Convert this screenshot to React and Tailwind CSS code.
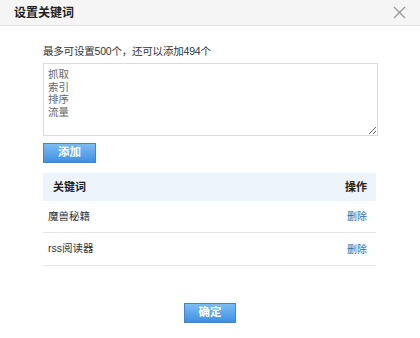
export default function App() {
  const font = { fontFamily: '"Liberation Sans", "Noto Sans CJK SC", sans-serif' };
  return (
    <div className="w-[420px] h-[338px] bg-white text-[#333] overflow-hidden" style={font}>
      <div className="h-[26px] bg-[#f5f5f5] border-b border-[#e3e3e3] flex items-center justify-between pl-[14px] pr-[14px]">
        <span className="text-[12px] font-bold text-[#222] leading-none">设置关键词</span>
        <svg width="13" height="13" viewBox="0 0 13 13" className="text-[#9a9a9a]">
          <path d="M1 1 L12 12 M12 1 L1 12" stroke="currentColor" strokeWidth="1.3" />
        </svg>
      </div>
      <div className="pl-[43px] pr-[42px]">
        <div className="mt-[18px] text-[10.5px] tracking-[-0.2px] leading-[14px] text-[#333]">最多可设置500个，还可以添加494个</div>
        <textarea
          className="block mt-[5px] w-full h-[73px] border border-[#dcdcdc] pl-[4px] pt-[4px] text-[10.5px] leading-[12.7px] text-[#666] outline-none resize"
          defaultValue={"抓取\n索引\n排序\n流量"}
          style={font}
        />
        <button className="mt-[7px] w-[53px] h-[20px] border border-[#3f84cc] bg-gradient-to-b from-[#7cbcf3] to-[#3f90e2] text-white text-[11.5px] font-bold leading-none flex items-center justify-center">
          添加
        </button>
        <div className="mt-[10px] w-[333px]">
          <div className="h-[28px] bg-[#edf4fc] flex items-center justify-between pl-[10px] pr-[9px] text-[11px] font-bold text-[#222]">
            <span>关键词</span>
            <span>操作</span>
          </div>
          <div className="h-[32px] border-b border-[#e6e6e6] flex items-center justify-between pl-[5px] pr-[9px] text-[10.5px]">
            <span>魔兽秘籍</span>
            <span className="text-[10px] text-[#2f6aa8]">删除</span>
          </div>
          <div className="h-[33px] border-b border-[#e6e6e6] flex items-center justify-between pl-[5px] pr-[9px] text-[10.5px]">
            <span>rss阅读器</span>
            <span className="text-[10px] text-[#2f6aa8]">删除</span>
          </div>
        </div>
      </div>
      <div className="flex justify-center mt-[37px]">
        <button className="w-[52px] h-[20px] border border-[#3f84cc] bg-gradient-to-b from-[#7cbcf3] to-[#3f90e2] text-white text-[11.5px] font-bold leading-none flex items-center justify-center">
          确定
        </button>
      </div>
    </div>
  );
}
